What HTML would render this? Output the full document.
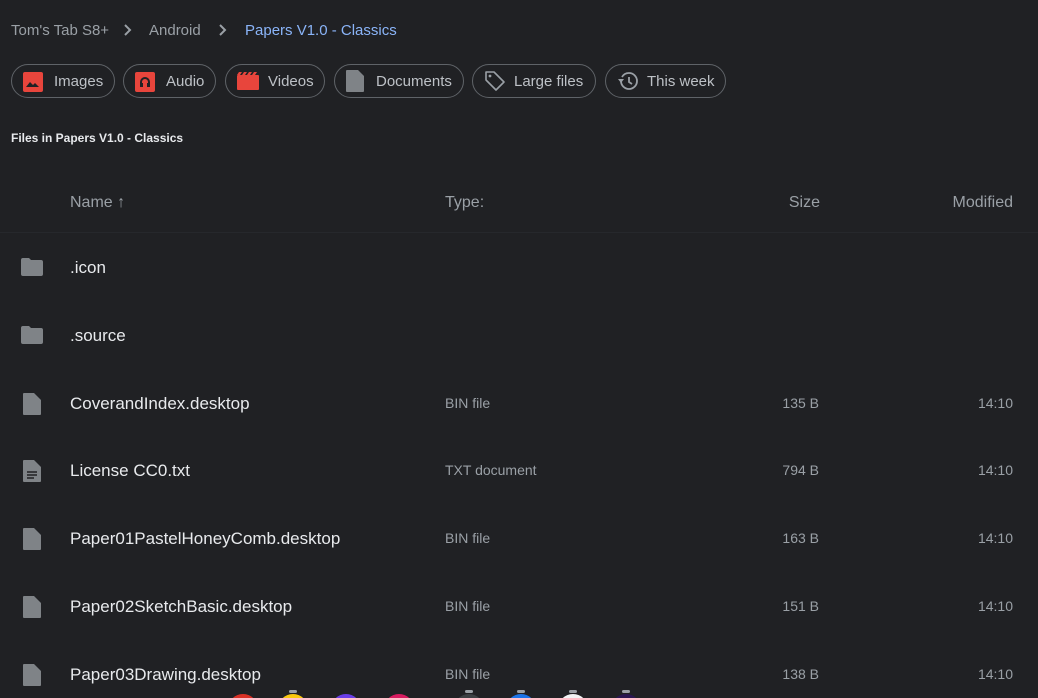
<!DOCTYPE html>
<html style="width:1038px;height:698px;overflow:hidden"><head><meta charset="utf-8"><style>
*{margin:0;padding:0;box-sizing:border-box}
body{width:1038px;height:698px;background:#202124;font-family:"Liberation Sans",sans-serif;position:relative;overflow:hidden}
.a{position:absolute;white-space:nowrap}
.bc{top:22px;font-size:15px;color:#9aa0a6}
.chip{position:absolute;top:64px;height:34px;border:1px solid #5f6368;border-radius:17px;color:#bdc1c6;font-size:15px}
.chip svg{position:absolute;left:11px;top:7px}
.chip span{position:absolute;top:8px}
.hd{top:194px;font-size:16px;color:#9aa0a6}
.nm{font-size:17px;color:#e8eaed;left:70px}
.ty{font-size:14px;color:#9aa0a6;left:445px}
.sz{font-size:14px;color:#9aa0a6;right:219px}
.md{font-size:14px;color:#9aa0a6;right:25px}
.ic{position:absolute;left:21px}
.dock{position:absolute;left:0;top:680px;width:1038px;height:18px;overflow:hidden}
.dot{position:absolute;top:14px;width:30px;height:30px;border-radius:50%}
.dash{position:absolute;top:10px;width:8px;height:3px;border-radius:2px;background:#9aa0a6}
</style></head><body>
<div class="a bc" style="left:11px">Tom's Tab S8+</div>
<svg class="a" style="left:122px;top:23px" width="12" height="14" viewBox="0 0 12 14"><path d="M3 2l5 5-5 5" stroke="#9aa0a6" stroke-width="2" fill="none"/></svg>
<div class="a bc" style="left:149px">Android</div>
<svg class="a" style="left:217px;top:23px" width="12" height="14" viewBox="0 0 12 14"><path d="M3 2l5 5-5 5" stroke="#9aa0a6" stroke-width="2" fill="none"/></svg>
<div class="a bc" style="left:245px;color:#8ab4f8">Papers V1.0 - Classics</div>

<div class="chip" style="left:11px;width:104px"><svg width="20" height="20" viewBox="0 0 20 20"><rect x="0" y="0" width="20" height="20" rx="2" fill="#e8453c"/><path d="M3 15l4-5 3 3 2-2 4 4z" fill="#202124"/></svg><span style="left:42px">Images</span></div>
<div class="chip" style="left:123px;width:93px"><svg width="20" height="20" viewBox="0 0 20 20"><rect width="20" height="20" rx="2" fill="#e8453c"/><path d="M5 15v-5a5 5 0 0110 0v5h-3v-4h1v-1a3 3 0 00-6 0v1h1v4z" fill="#202124"/></svg><span style="left:42px">Audio</span></div>
<div class="chip" style="left:225px;width:100px"><svg width="22" height="20" viewBox="0 0 22 20"><rect y="3" width="22" height="15" rx="1" fill="#e8453c"/><path d="M2 0h3l-2 3H0zM7 0h3l-2 3H5zM12 0h3l-2 3h-3zM17 0h3l-2 3h-3z" fill="#e8453c"/></svg><span style="left:42px">Videos</span></div>
<div class="chip" style="left:334px;width:130px"><svg width="18" height="22" viewBox="0 0 18 22" style="top:5px"><path d="M1 0h11l6 6v15a1 1 0 01-1 1H1a1 1 0 01-1-1V1a1 1 0 011-1z" fill="#7f8387"/></svg><span style="left:41px">Documents</span></div>
<div class="chip" style="left:472px;width:124px"><svg width="22" height="22" viewBox="0 0 22 22" style="top:5px"><path d="M2 2h8l10 10-8 8L2 10z" stroke="#9aa0a6" stroke-width="1.6" fill="none" stroke-linejoin="round"/><circle cx="6" cy="6" r="1.4" fill="#9aa0a6"/></svg><span style="left:41px">Large files</span></div>
<div class="chip" style="left:605px;width:121px"><svg width="22" height="22" viewBox="0 0 22 22" style="top:5px"><path d="M4 11a8 8 0 108-8 8 8 0 00-7 4" stroke="#9aa0a6" stroke-width="1.8" fill="none"/><path d="M1 9l3 4 3-4z" fill="#9aa0a6"/><path d="M12 7v5l3 2" stroke="#9aa0a6" stroke-width="1.8" fill="none"/></svg><span style="left:41px">This week</span></div>

<div class="a" style="left:11px;top:131px;font-size:12px;color:#e8eaed;font-weight:bold">Files in Papers V1.0 - Classics</div>

<div class="a hd" style="left:70px">Name &#8593;</div>
<div class="a hd" style="left:445px">Type:</div>
<div class="a hd" style="right:218px">Size</div>
<div class="a hd" style="right:25px">Modified</div>
<div class="a" style="left:0;top:232px;width:1038px;height:1px;background:#26282c"></div>

<svg class="ic" style="top:258px" width="22" height="18" viewBox="0 0 22 18"><path d="M0 2a2 2 0 012-2h6l2 2h10a2 2 0 012 2v12a2 2 0 01-2 2H2a2 2 0 01-2-2z" fill="#7f8387"/></svg>
<div class="a nm" style="top:258px">.icon</div>
<svg class="ic" style="top:326px" width="22" height="18" viewBox="0 0 22 18"><path d="M0 2a2 2 0 012-2h6l2 2h10a2 2 0 012 2v12a2 2 0 01-2 2H2a2 2 0 01-2-2z" fill="#7f8387"/></svg>
<div class="a nm" style="top:326px">.source</div>

<svg class="ic" style="top:393px;left:23px" width="18" height="22" viewBox="0 0 18 22"><path d="M1 0h10l7 7v14a1 1 0 01-1 1H1a1 1 0 01-1-1V1a1 1 0 011-1z" fill="#7f8387"/></svg>
<div class="a nm" style="top:394px">CoverandIndex.desktop</div><div class="a ty" style="top:395px">BIN file</div><div class="a sz" style="top:395px">135 B</div><div class="a md" style="top:395px">14:10</div>

<svg class="ic" style="top:460px;left:23px" width="18" height="22" viewBox="0 0 18 22"><path d="M1 0h10l7 7v14a1 1 0 01-1 1H1a1 1 0 01-1-1V1a1 1 0 011-1z" fill="#7f8387"/><path d="M4 12h10M4 15h10M4 18h7" stroke="#202124" stroke-width="1.6"/></svg>
<div class="a nm" style="top:461px">License CC0.txt</div><div class="a ty" style="top:462px">TXT document</div><div class="a sz" style="top:462px">794 B</div><div class="a md" style="top:462px">14:10</div>

<svg class="ic" style="top:528px;left:23px" width="18" height="22" viewBox="0 0 18 22"><path d="M1 0h10l7 7v14a1 1 0 01-1 1H1a1 1 0 01-1-1V1a1 1 0 011-1z" fill="#7f8387"/></svg>
<div class="a nm" style="top:529px">Paper01PastelHoneyComb.desktop</div><div class="a ty" style="top:530px">BIN file</div><div class="a sz" style="top:530px">163 B</div><div class="a md" style="top:530px">14:10</div>

<svg class="ic" style="top:596px;left:23px" width="18" height="22" viewBox="0 0 18 22"><path d="M1 0h10l7 7v14a1 1 0 01-1 1H1a1 1 0 01-1-1V1a1 1 0 011-1z" fill="#7f8387"/></svg>
<div class="a nm" style="top:597px">Paper02SketchBasic.desktop</div><div class="a ty" style="top:598px">BIN file</div><div class="a sz" style="top:598px">151 B</div><div class="a md" style="top:598px">14:10</div>

<svg class="ic" style="top:664px;left:23px" width="18" height="22" viewBox="0 0 18 22"><path d="M1 0h10l7 7v14a1 1 0 01-1 1H1a1 1 0 01-1-1V1a1 1 0 011-1z" fill="#7f8387"/></svg>
<div class="a nm" style="top:665px">Paper03Drawing.desktop</div><div class="a ty" style="top:666px">BIN file</div><div class="a sz" style="top:666px">138 B</div><div class="a md" style="top:666px">14:10</div>

<div class="dock">
<div class="dot" style="left:228px;background:#d93025"></div>
<div class="dot" style="left:278px;background:#f9c80e"></div>
<div class="dot" style="left:331px;background:#6a3de8"></div>
<div class="dot" style="left:384px;background:#d81b60"></div>
<div class="dot" style="left:454px;background:#3c4043"></div>
<div class="dot" style="left:506px;background:#1a73e8"></div>
<div class="dot" style="left:558px;background:#f1f3f4"></div>
<div class="dot" style="left:611px;background:#2a1650"></div>
<div class="dash" style="left:289px"></div><div class="dash" style="left:465px"></div><div class="dash" style="left:517px"></div><div class="dash" style="left:569px"></div><div class="dash" style="left:622px"></div>
</div>
</body></html>
